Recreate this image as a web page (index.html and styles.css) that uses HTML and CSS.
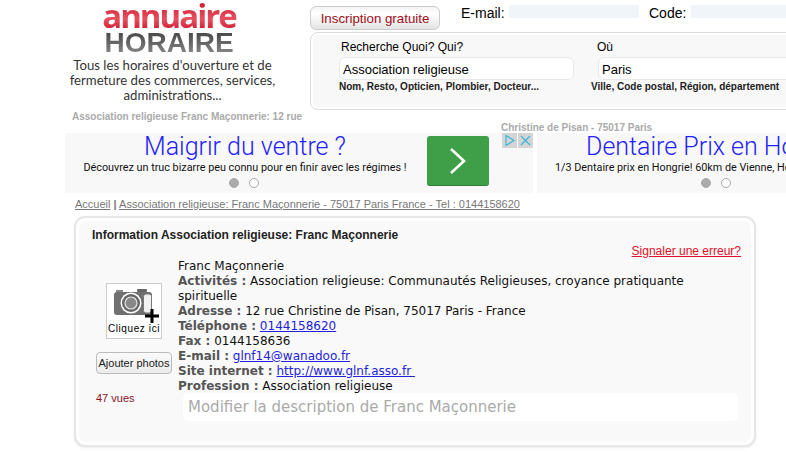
FILE: index.html
```html
<!DOCTYPE html>
<html lang="fr">
<head>
<meta charset="utf-8">
<title>Franc Maçonnerie</title>
<link rel="stylesheet" href="styles.css">
</head>
<body>
<div class="page">
  <header class="top">
    <div class="brand">
      <div class="logo-a">annuaire</div>
      <div class="logo-h">HORAIRE</div>
      <p class="tagline">Tous les horaires d'ouverture et de<br>fermeture des commerces, services,<br>administrations...</p>
      <div class="crumbhead">Association religieuse Franc Maçonnerie: 12 rue</div>
    </div>
    <div class="tools">
      <div class="loginrow">
        <button class="signup">Inscription gratuite</button>
        <div class="login">
          <span class="login-label">E-mail:</span><span class="login-field"></span>
          <span class="login-label code">Code:</span><span class="login-field short"></span>
        </div>
      </div>
      <div class="search">
        <div class="search-col what">
          <label class="search-label">Recherche Quoi? Qui?</label>
          <div class="search-input">Association religieuse</div>
          <div class="search-hint">Nom, Resto, Opticien, Plombier, Docteur...</div>
        </div>
        <div class="search-col where">
          <label class="search-label">Où</label>
          <div class="search-input">Paris</div>
          <div class="search-hint">Ville, Code postal, Région, département</div>
        </div>
      </div>
    </div>
  </header>
  <div class="crumbtail">Christine de Pisan - 75017 Paris</div>
  <div class="ads">
    <div class="ad first">
      <div class="ad-copy">
        <div class="ad-title">Maigrir du ventre ?</div>
        <div class="ad-text">Découvrez un truc bizarre peu connu pour en finir avec les régimes !</div>
        <div class="dots"><i class="dot on"></i><i class="dot"></i></div>
      </div>
      <div class="ad-go">
        <svg width="20" height="28" viewBox="0 0 20 28"><path d="M3 2 L16 14 L3 26" fill="none" stroke="#fff" stroke-width="2.6"/></svg>
      </div>
      <div class="adchoices">
        <span class="ac"><svg width="12" height="13" viewBox="0 0 12 13"><path d="M2 1.5 L10 6.5 L2 11.5 Z" fill="none" stroke="#36b6d8" stroke-width="1.1"/></svg></span>
        <span class="ac"><svg width="11" height="11" viewBox="0 0 11 11"><path d="M1 1 L10 10 M10 1 L1 10" fill="none" stroke="#36b6d8" stroke-width="1.2"/></svg></span>
      </div>
    </div>
    <div class="ad second">
      <div class="ad-title">Dentaire Prix en Hongrie</div>
      <div class="ad-text">1/3 Dentaire prix en Hongrie! 60km de Vienne, Hongrie</div>
      <div class="dots"><i class="dot on"></i><i class="dot"></i></div>
    </div>
  </div>
  <nav class="breadcrumb"><a href="#">Accueil</a> <b>|</b> <a href="#">Association religieuse: Franc Maçonnerie - 75017 Paris France - Tel : 0144158620</a></nav>
  <section class="card">
    <div class="card-inner">
      <h1 class="card-title">Information Association religieuse: Franc Maçonnerie</h1>
      <div class="report-row"><a class="report" href="#">Signaler une erreur?</a></div>
      <div class="card-body">
        <div class="side">
          <div class="photo">
            <svg class="cam" width="54" height="39" viewBox="0 0 54 39">
              <rect x="30" y="5" width="10" height="3" rx="1" fill="#666"/>
              <rect x="7" y="8" width="38" height="23" rx="3" fill="#707070"/>
              <rect x="9" y="6" width="7" height="2" fill="#888"/>
              <circle cx="24" cy="19" r="10.5" fill="#fff"/>
              <circle cx="24" cy="19" r="9" fill="#666"/>
              <circle cx="24" cy="19" r="6" fill="#888" stroke="#e4e4e4" stroke-width="1.2"/>
              <rect x="36.5" y="10" width="8" height="19" rx="2.5" fill="#f2f2f2" stroke="#777" stroke-width="1"/>
              <path d="M45 25 V39 M38 32 H52" stroke="#000" stroke-width="3" fill="none"/>
            </svg>
            <div class="photo-text">Cliquez ici</div>
          </div>
          <button class="add">Ajouter photos</button>
          <div class="views">47 vues</div>
        </div>
        <div class="details">
          <div>Franc Maçonnerie</div>
          <div><b>Activités :</b> Association religieuse: Communautés Religieuses, croyance pratiquante spirituelle</div>
          <div><b>Adresse :</b> 12 rue Christine de Pisan, 75017 Paris - France</div>
          <div><b>Téléphone :</b> <a href="#">0144158620</a></div>
          <div><b>Fax :</b> 0144158636</div>
          <div><b>E-mail :</b> <a href="#">glnf14@wanadoo.fr</a></div>
          <div><b>Site internet :</b> <a href="#">http://www.glnf.asso.fr&nbsp;</a></div>
          <div><b>Profession :</b> Association religieuse</div>
          <div class="describe">Modifier la description de Franc Maçonnerie</div>
        </div>
      </div>
    </div>
  </section>
</div>
</body>
</html>
```
FILE: styles.css
```css
* { box-sizing: border-box; }
html, body { margin: 0; height: 452px; overflow: hidden; background: #fff; }
body { font-family: "Liberation Sans", Arial, sans-serif; color: #000; }
.page { width: 786px; height: 452px; overflow: hidden; }

.top { display: flex; height: 123px; }
.brand { width: 215px; margin-left: 65px; text-align: center; flex: none; }
.logo-a {
  font-family: "Open Sans", sans-serif; font-weight: 700; font-size: 33px; line-height: 30px;
  letter-spacing: -2px; margin: 1px 7px 0 0;
  background: linear-gradient(#c9162d, #e8505f 60%, #c9162d);
  -webkit-background-clip: text; background-clip: text; color: transparent;
}
.logo-h {
  font-weight: 700; font-size: 28px; line-height: 24px; margin-right: 7px;
  background: linear-gradient(#444, #8a8a8a);
  -webkit-background-clip: text; background-clip: text; color: transparent;
}
.tagline { margin: 3px 0 0; font-family: Lato, sans-serif; font-size: 13.2px; line-height: 15px; color: #333; white-space: nowrap; }
.crumbhead { margin-top: 8px; padding-left: 7px; text-align: left; font-size: 10px; line-height: 12px; font-weight: 700; color: #aaa; white-space: nowrap; }

.tools { margin-left: 30px; flex: none; width: 500px; }
.loginrow { display: flex; height: 32px; }
.signup {
  flex: none; width: 130px; height: 24px; margin-top: 6px; padding: 0; border: 1px solid #ccc; border-radius: 6px;
  background: linear-gradient(#f4f4f4, #fff 30%, #e4e4e4);
  color: #a01020; font: 13.3px "Liberation Sans", sans-serif; white-space: nowrap;
}
.login { display: flex; flex: none; align-items: flex-start; margin-left: 21px; padding-top: 5px; font-size: 14px; }
.login-label { line-height: 17px; width: 48px; flex: none; }
.login-label.code { width: 42px; margin-left: 10px; }
.login-field { flex: none; width: 130px; height: 13px; background: #f0f5f9; }
.login-field.short { width: 130px; }

.search {
  display: flex; width: 520px; height: 78px; padding: 7px 0 0 28px;
  border: 1px solid #ddd; border-radius: 8px 0 0 8px; background: #f8f8f8;
  box-shadow: inset 0 0 0 2px #fff;
}
.search-col { flex: none; }
.search-col.what { width: 259px; }
.search-col.where { width: 260px; }
.search-label { display: block; padding-left: 2px; font-size: 12px; line-height: 15px; }
.where .search-label { padding-left: 0; margin-left: -1px; }
.search-input {
  width: 235px; height: 23px; margin-top: 2px; padding: 4px 3px; background: #fff; border: 1px solid #e8e8e8;
  border-radius: 6px; font-size: 13px; line-height: 15px;
}
.where .search-input { width: 260px; }
.search-hint { font-size: 10px; font-weight: 700; line-height: 12px; margin-top: 1px; white-space: nowrap; color: #222; }
.where .search-hint { margin-left: -7px; }

.crumbtail { height: 10px; padding-left: 501px; font-size: 10px; line-height: 10px; font-weight: 700; color: #aaa; white-space: nowrap; }

.ads { display: flex; gap: 4px; height: 60px; margin-left: 65px; }
.ad { position: relative; height: 60px; background: #f8f8f8; flex: none; font-family: Roboto, sans-serif; }
.ad.first { width: 468px; display: flex; }
.ad.second { width: 400px; white-space: nowrap; }
.ad-copy { width: 360px; text-align: center; }
.ad-title { font-size: 25px; line-height: 28px; font-weight: 300; color: #2222ff; }
.ad-text { font-size: 10.8px; line-height: 13px; font-weight: 400; color: #111; white-space: nowrap; }
.dots { display: flex; justify-content: center; gap: 10px; margin: 4px 2px 0 0; }
.dot { width: 10px; height: 10px; border-radius: 50%; border: 1px solid #aaa; background: #fff; }
.dot.on { background: #aaa; }
.ad-go {
  width: 62px; height: 50px; margin: 3px 0 0 2px; background: #3f9f48; border-radius: 3px; border-bottom: 1px solid #2f7f38;
  display: flex; align-items: center; justify-content: center;
}
.adchoices { position: absolute; top: 0; right: 0; display: flex; gap: 1px; }
.ac { width: 15px; height: 15px; background: #d4d4d4; display: flex; align-items: center; justify-content: center; }
.second .ad-title { padding-left: 49px; }
.second .ad-text { padding-left: 18px; }
.second .dots { justify-content: flex-start; padding-left: 164px; }

.breadcrumb { margin: 4px 0 0 75px; font-size: 11px; line-height: 14px; color: #777; white-space: nowrap; }
.breadcrumb a { color: #777; }

.card {
  width: 682px; height: 231px; margin: 5px 0 0 74px; padding: 3px;
  border: 2px solid #e6e6e6; border-radius: 11px; background: #fff;
  box-shadow: 0 1px 2px rgba(0,0,0,.08);
}
.card-inner { height: 100%; background: #f9f9f9; border-radius: 7px; padding: 7px 10px 0 13px; }
.card-title { margin: 0; font-size: 12px; line-height: 14px; font-weight: 700; color: #222; }
.report-row { display: flex; justify-content: flex-end; margin-top: 2px; height: 14px; }
.report { font-size: 12px; line-height: 14px; color: #e0102a; }
.card-body { display: flex; margin-top: 1px; }
.side { width: 86px; flex: none; padding-left: 4px; }
.photo { width: 56px; height: 56px; margin: 24px 0 0 10px; background: #fff; border: 1px solid #ccc; display: flex; flex-direction: column; align-items: center; }
.cam { flex: none; }
.photo-text { font-size: 10px; line-height: 11px; letter-spacing: .6px; white-space: nowrap; }
.add {
  display: block; width: 76px; height: 22px; margin-top: 13px; padding: 0; border: 1px solid #bbb; border-radius: 4px;
  background: linear-gradient(#fafafa, #ececec); color: #222; font: 11px "Liberation Sans", sans-serif; white-space: nowrap;
}
.views { margin-top: 18px; font-size: 11px; line-height: 12px; color: #8a1020; }
.details { width: 570px; font-family: "DejaVu Sans", Verdana, sans-serif; font-size: 12px; line-height: 15px; color: #111; }
.details b { color: #555; font-weight: 700; }
.details a { color: #2222dd; }
.describe { height: 28px; margin: -1px 0 0 5px; width: 555px; padding: 0 5px; background: #fff; border-radius: 5px; font-size: 15px; line-height: 28px; color: #aaa; }
```
